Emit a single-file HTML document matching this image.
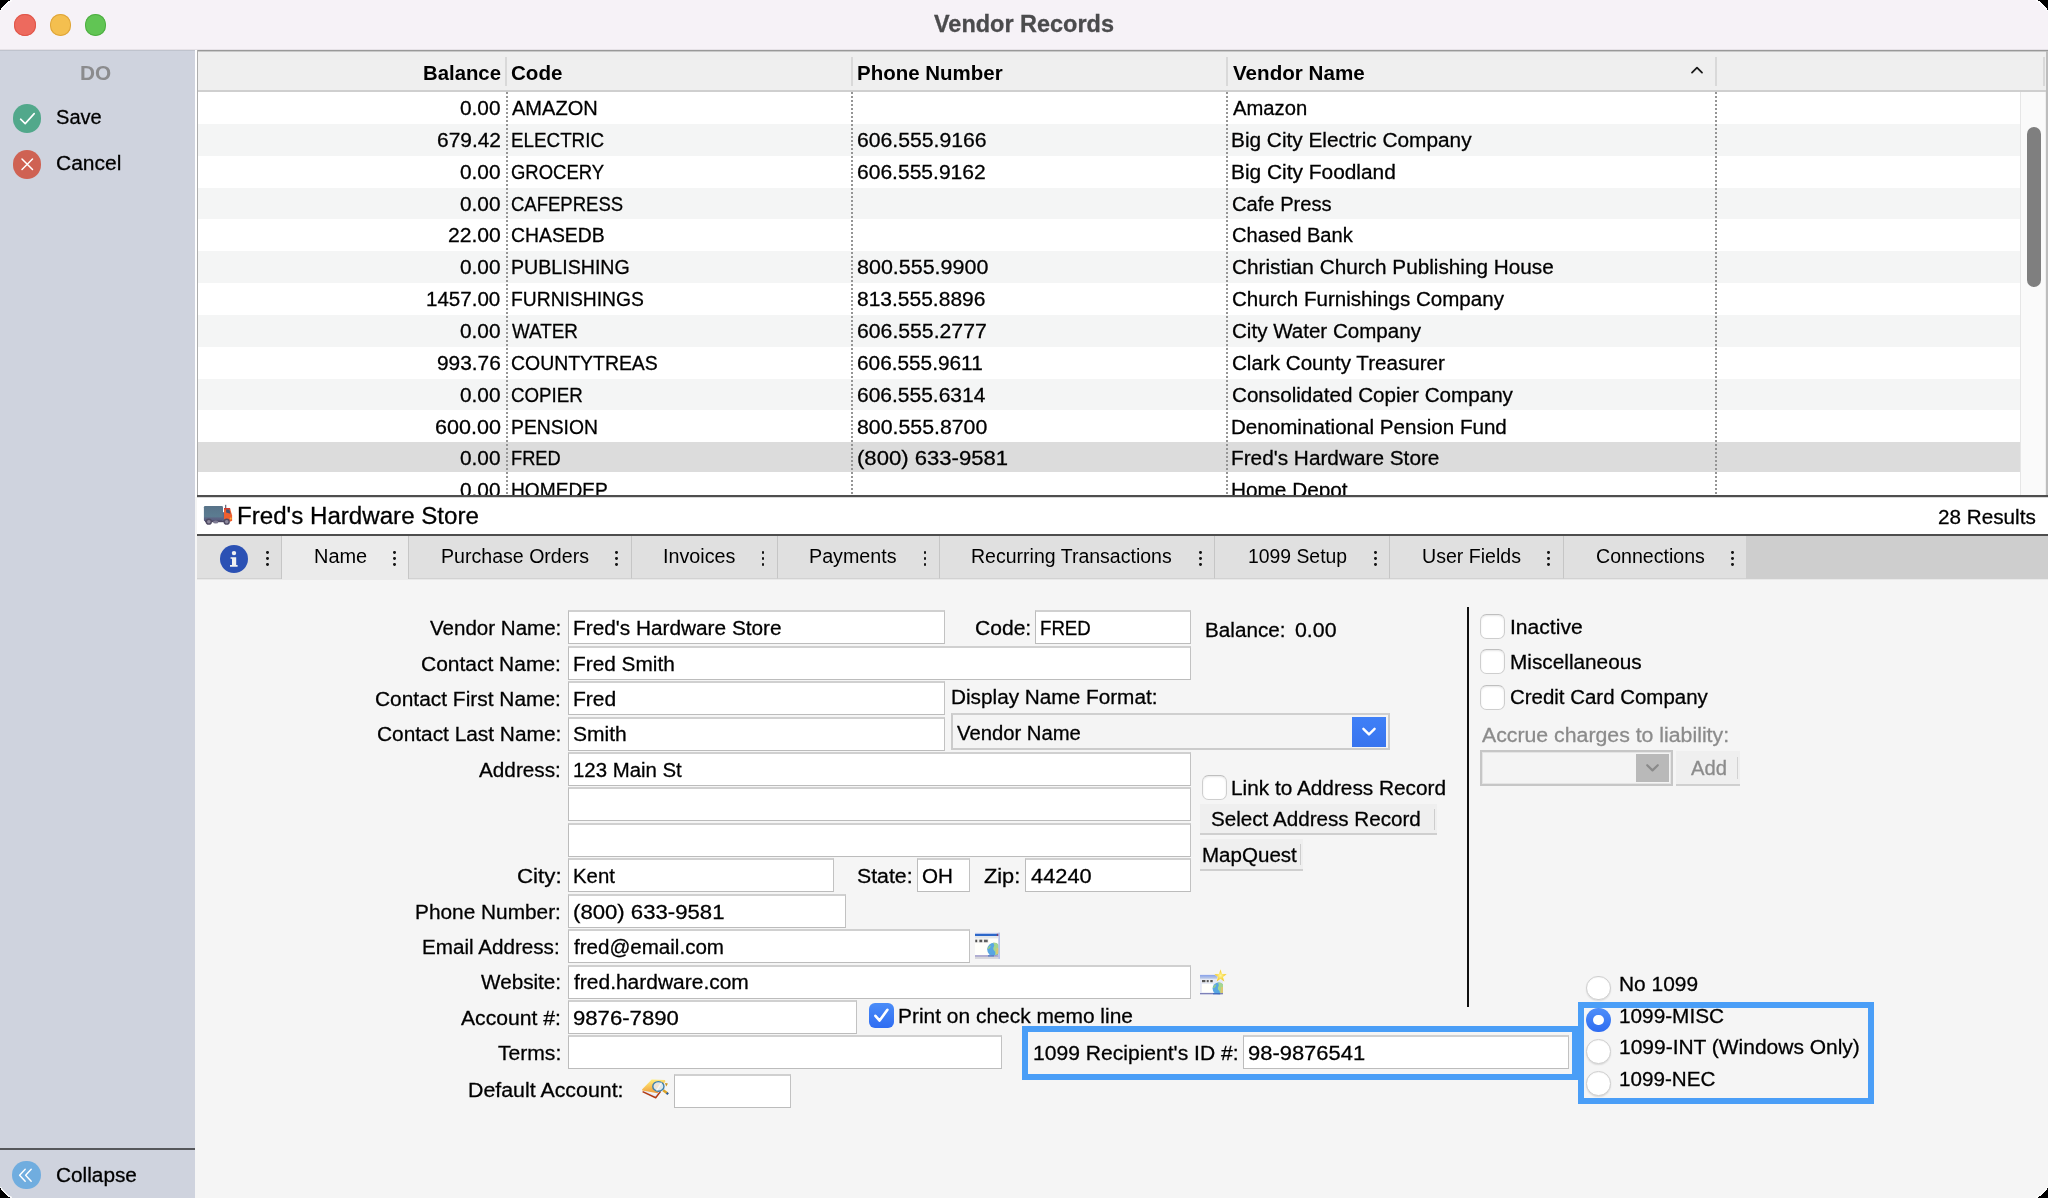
<!DOCTYPE html>
<html><head><meta charset="utf-8"><title>Vendor Records</title>
<style>
html,body{margin:0;padding:0;background:#000;}
body{width:2048px;height:1198px;overflow:hidden;font-family:"Liberation Sans", sans-serif;}
#win{position:absolute;left:0;top:0;width:2048px;height:1198px;overflow:hidden;background:#f5f5f5;will-change:transform;}
#win div,#win span.t,#win svg.a{position:absolute;box-sizing:border-box;}
#win div>svg{display:block;}
span.t{white-space:pre;font-family:"Liberation Sans", sans-serif;transform-origin:0 0;-webkit-text-stroke:.28px currentColor;}
span.b{-webkit-text-stroke:0;}
.f{background:#fff;border:1px solid #bcbcbc;border-top:2px solid #d0d0d0;border-right-color:#c2c2c2;}
</style></head>
<body>
<div id="win">
<div style="left:0px;top:0px;width:2048px;height:50px;background:#f6f2f7;"></div>
<div style="left:0px;top:49px;width:2048px;height:1px;background:#e6e2e7;"></div>
<div style="left:14px;top:14px;width:21.5px;height:21.5px;border-radius:50%;background:#ed6a5e;box-shadow:inset 0 0 0 1px #e0574b;"></div>
<div style="left:49.5px;top:14px;width:21.5px;height:21.5px;border-radius:50%;background:#f4bf4f;box-shadow:inset 0 0 0 1px #dea53a;"></div>
<div style="left:84.5px;top:14px;width:21.5px;height:21.5px;border-radius:50%;background:#61c554;box-shadow:inset 0 0 0 1px #4fae43;"></div>
<span id="t1" class="t b" style="left:933.90px;top:9.23px;font-size:23.3px;line-height:30px;color:#4b4b4d;font-weight:700;transform:scaleX(1.0072);-webkit-text-stroke:.3px #4b4b4d;">Vendor Records</span>
<div style="left:0px;top:50px;width:195px;height:1148px;background:#cfd3de;"></div>
<div style="left:0px;top:50px;width:195px;height:1px;background:#bfc3cd;"></div>
<span id="t2" class="t b" style="left:80.15px;top:60.87px;font-size:20px;line-height:24px;color:#8b8b8d;font-weight:700;transform:scaleX(1.0378);">DO</span>
<div style="left:12.5px;top:104.2px;width:28.5px;height:28.5px;border-radius:50%;background:#52a88b;"><svg width="28.5" height="28.5" viewBox="0 0 28.5 28.5"><path d="M7.6 15.2 L12.2 19.6 L21.2 9.6" fill="none" stroke="#fff" stroke-width="1.6" stroke-linecap="round" stroke-linejoin="round"/></svg></div>
<span id="t3" class="t" style="left:56.10px;top:105.07px;font-size:20px;line-height:24px;color:#000;transform:scaleX(1.0031);">Save</span>
<div style="left:12.5px;top:150.2px;width:28.5px;height:28.5px;border-radius:50%;background:#cf6253;"><svg width="28.5" height="28.5" viewBox="0 0 28.5 28.5"><path d="M9 9 L19.5 19.5 M19.5 9 L9 19.5" fill="none" stroke="#fff" stroke-width="1.5" stroke-linecap="round"/></svg></div>
<span id="t4" class="t" style="left:55.95px;top:151.07px;font-size:20px;line-height:24px;color:#000;transform:scaleX(1.0498);">Cancel</span>
<div style="left:0px;top:1148px;width:195px;height:2px;background:#55565a;"></div>
<div style="left:12.3px;top:1160.6px;width:28.5px;height:28.5px;border-radius:50%;background:#70addf;"><svg width="28.5" height="28.5" viewBox="0 0 28.5 28.5"><path d="M13.2 8.2 L7.6 14.2 L13.2 20.2 M19.2 8.2 L13.6 14.2 L19.2 20.2" fill="none" stroke="#fff" stroke-width="1.4" stroke-linecap="round" stroke-linejoin="round"/></svg></div>
<span id="t5" class="t" style="left:55.96px;top:1162.77px;font-size:20px;line-height:24px;color:#000;transform:scaleX(1.0395);">Collapse</span>
<div style="left:195px;top:50px;width:1853px;height:447px;background:#fff;"></div>
<div style="left:197px;top:50px;width:1851px;height:1px;background:#999;"></div>
<div style="left:197px;top:51px;width:1851px;height:1px;background:#c9c9c9;"></div>
<div style="left:198px;top:52px;width:1848px;height:39px;background:#efefef;"></div>
<div style="left:198px;top:90px;width:1848px;height:2px;background:#cfcfcf;"></div>
<div style="left:198px;top:92px;width:1846px;height:403px;overflow:hidden;">
<div style="left:0px;top:32px;width:1822px;height:32px;background:#f4f5f5;"></div>
<div style="left:0px;top:96px;width:1822px;height:31px;background:#f4f5f5;"></div>
<div style="left:0px;top:159px;width:1822px;height:32px;background:#f4f5f5;"></div>
<div style="left:0px;top:223px;width:1822px;height:32px;background:#f4f5f5;"></div>
<div style="left:0px;top:287px;width:1822px;height:31px;background:#f4f5f5;"></div>
<div style="left:0px;top:350px;width:1822px;height:30px;background:#dcdcdc;"></div>
</div>
<div style="left:2020px;top:92px;width:26px;height:403px;background:#fafafa;border-left:1px solid #e6e6e6;"></div>
<div style="left:2045px;top:92px;width:1px;height:403px;background:#efefef;"></div>
<div style="left:2027px;top:126.5px;width:14px;height:160px;background:#7f7f7f;border-radius:7px;"></div>
<div style="left:506px;top:92px;width:2px;height:403px;background:repeating-linear-gradient(to bottom,#959595 0,#959595 2px,transparent 2px,transparent 4px);"></div>
<div style="left:851px;top:92px;width:2px;height:403px;background:repeating-linear-gradient(to bottom,#959595 0,#959595 2px,transparent 2px,transparent 4px);"></div>
<div style="left:1226px;top:92px;width:2px;height:403px;background:repeating-linear-gradient(to bottom,#959595 0,#959595 2px,transparent 2px,transparent 4px);"></div>
<div style="left:1715px;top:92px;width:2px;height:403px;background:repeating-linear-gradient(to bottom,#959595 0,#959595 2px,transparent 2px,transparent 4px);"></div>
<div style="left:505px;top:57px;width:2px;height:29px;background:#d9d9d9;"></div>
<div style="left:851px;top:57px;width:2px;height:29px;background:#d9d9d9;"></div>
<div style="left:1226px;top:57px;width:2px;height:29px;background:#d9d9d9;"></div>
<div style="left:1715px;top:57px;width:2px;height:29px;background:#d9d9d9;"></div>
<div style="left:2042.5px;top:57px;width:2px;height:29px;background:#d9d9d9;"></div>
<span id="t6" class="t b" style="left:422.68px;top:61.07px;font-size:20px;line-height:24px;color:#000;font-weight:700;transform:scaleX(1.0162);">Balance</span>
<span id="t7" class="t b" style="left:511.18px;top:61.07px;font-size:20px;line-height:24px;color:#000;font-weight:700;transform:scaleX(1.0293);">Code</span>
<span id="t8" class="t b" style="left:856.67px;top:61.07px;font-size:20px;line-height:24px;color:#000;font-weight:700;transform:scaleX(1.0238);">Phone Number</span>
<span id="t9" class="t b" style="left:1232.90px;top:61.07px;font-size:20px;line-height:24px;color:#000;font-weight:700;transform:scaleX(1.0307);">Vendor Name</span>
<div style="left:1690px;top:65px;width:14px;height:10px;"><svg width="14" height="10" viewBox="0 0 14 10"><path d="M2 7.6 L7 2.6 L12 7.6" fill="none" stroke="#1a1a1a" stroke-width="1.8" stroke-linecap="round" stroke-linejoin="round"/></svg></div>
<div style="left:198px;top:92px;width:1846px;height:403px;overflow:hidden;"><div style="left:-198px;top:-92px;width:2048px;height:600px;">
<span id="t10" class="t" style="left:460.27px;top:96.07px;font-size:20px;line-height:24px;color:#000;transform:scaleX(1.0399);">0.00</span>
<span id="t11" class="t" style="left:511.90px;top:96.07px;font-size:20px;line-height:24px;color:#000;transform:scaleX(1.0022);">AMAZON</span>
<span id="t12" class="t" style="left:1233.10px;top:96.07px;font-size:20px;line-height:24px;color:#000;transform:scaleX(1.0105);">Amazon</span>
<span id="t13" class="t" style="left:436.95px;top:128.07px;font-size:20px;line-height:24px;color:#000;transform:scaleX(1.0464);">679.42</span>
<span id="t14" class="t" style="left:511.30px;top:128.07px;font-size:20px;line-height:24px;color:#000;transform:scaleX(0.9403);">ELECTRIC</span>
<span id="t15" class="t" style="left:857.24px;top:128.07px;font-size:20px;line-height:24px;color:#000;transform:scaleX(1.0596);">606.555.9166</span>
<span id="t16" class="t" style="left:1231.44px;top:128.07px;font-size:20px;line-height:24px;color:#000;transform:scaleX(1.0406);">Big City Electric Company</span>
<span id="t17" class="t" style="left:460.27px;top:160.07px;font-size:20px;line-height:24px;color:#000;transform:scaleX(1.0399);">0.00</span>
<span id="t18" class="t" style="left:511.38px;top:160.07px;font-size:20px;line-height:24px;color:#000;transform:scaleX(0.9233);">GROCERY</span>
<span id="t19" class="t" style="left:857.25px;top:160.07px;font-size:20px;line-height:24px;color:#000;transform:scaleX(1.0521);">606.555.9162</span>
<span id="t20" class="t" style="left:1231.43px;top:160.07px;font-size:20px;line-height:24px;color:#000;transform:scaleX(1.0443);">Big City Foodland</span>
<span id="t21" class="t" style="left:460.27px;top:192.07px;font-size:20px;line-height:24px;color:#000;transform:scaleX(1.0399);">0.00</span>
<span id="t22" class="t" style="left:511.37px;top:192.07px;font-size:20px;line-height:24px;color:#000;transform:scaleX(0.9254);">CAFEPRESS</span>
<span id="t23" class="t" style="left:1232.09px;top:192.07px;font-size:20px;line-height:24px;color:#000;transform:scaleX(1.0069);">Cafe Press</span>
<span id="t24" class="t" style="left:447.94px;top:223.07px;font-size:20px;line-height:24px;color:#000;transform:scaleX(1.0553);">22.00</span>
<span id="t25" class="t" style="left:511.33px;top:223.07px;font-size:20px;line-height:24px;color:#000;transform:scaleX(0.9688);">CHASEDB</span>
<span id="t26" class="t" style="left:1232.09px;top:223.07px;font-size:20px;line-height:24px;color:#000;transform:scaleX(1.0061);">Chased Bank</span>
<span id="t27" class="t" style="left:460.27px;top:255.07px;font-size:20px;line-height:24px;color:#000;transform:scaleX(1.0399);">0.00</span>
<span id="t28" class="t" style="left:511.23px;top:255.07px;font-size:20px;line-height:24px;color:#000;transform:scaleX(0.9806);">PUBLISHING</span>
<span id="t29" class="t" style="left:857.44px;top:255.07px;font-size:20px;line-height:24px;color:#000;transform:scaleX(1.0735);">800.555.9900</span>
<span id="t30" class="t" style="left:1232.06px;top:255.07px;font-size:20px;line-height:24px;color:#000;transform:scaleX(1.0375);">Christian Church Publishing House</span>
<span id="t31" class="t" style="left:426.46px;top:287.07px;font-size:20px;line-height:24px;color:#000;transform:scaleX(1.0275);">1457.00</span>
<span id="t32" class="t" style="left:511.26px;top:287.07px;font-size:20px;line-height:24px;color:#000;transform:scaleX(0.9642);">FURNISHINGS</span>
<span id="t33" class="t" style="left:857.46px;top:287.07px;font-size:20px;line-height:24px;color:#000;transform:scaleX(1.0495);">813.555.8896</span>
<span id="t34" class="t" style="left:1232.07px;top:287.07px;font-size:20px;line-height:24px;color:#000;transform:scaleX(1.0278);">Church Furnishings Company</span>
<span id="t35" class="t" style="left:460.27px;top:319.07px;font-size:20px;line-height:24px;color:#000;transform:scaleX(1.0399);">0.00</span>
<span id="t36" class="t" style="left:511.90px;top:319.07px;font-size:20px;line-height:24px;color:#000;transform:scaleX(0.9415);">WATER</span>
<span id="t37" class="t" style="left:857.24px;top:319.07px;font-size:20px;line-height:24px;color:#000;transform:scaleX(1.0604);">606.555.2777</span>
<span id="t38" class="t" style="left:1232.07px;top:319.07px;font-size:20px;line-height:24px;color:#000;transform:scaleX(1.0282);">City Water Company</span>
<span id="t39" class="t" style="left:437.06px;top:351.07px;font-size:20px;line-height:24px;color:#000;transform:scaleX(1.0429);">993.76</span>
<span id="t40" class="t" style="left:511.33px;top:351.07px;font-size:20px;line-height:24px;color:#000;transform:scaleX(0.9713);">COUNTYTREAS</span>
<span id="t41" class="t" style="left:857.26px;top:351.07px;font-size:20px;line-height:24px;color:#000;transform:scaleX(1.0401);">606.555.9611</span>
<span id="t42" class="t" style="left:1232.07px;top:351.07px;font-size:20px;line-height:24px;color:#000;transform:scaleX(1.0294);">Clark County Treasurer</span>
<span id="t43" class="t" style="left:460.27px;top:383.07px;font-size:20px;line-height:24px;color:#000;transform:scaleX(1.0399);">0.00</span>
<span id="t44" class="t" style="left:511.36px;top:383.07px;font-size:20px;line-height:24px;color:#000;transform:scaleX(0.9354);">COPIER</span>
<span id="t45" class="t" style="left:857.25px;top:383.07px;font-size:20px;line-height:24px;color:#000;transform:scaleX(1.0487);">606.555.6314</span>
<span id="t46" class="t" style="left:1232.07px;top:383.07px;font-size:20px;line-height:24px;color:#000;transform:scaleX(1.0314);">Consolidated Copier Company</span>
<span id="t47" class="t" style="left:434.92px;top:415.07px;font-size:20px;line-height:24px;color:#000;transform:scaleX(1.0766);">600.00</span>
<span id="t48" class="t" style="left:511.25px;top:415.07px;font-size:20px;line-height:24px;color:#000;transform:scaleX(0.9657);">PENSION</span>
<span id="t49" class="t" style="left:857.45px;top:415.07px;font-size:20px;line-height:24px;color:#000;transform:scaleX(1.0652);">800.555.8700</span>
<span id="t50" class="t" style="left:1231.45px;top:415.07px;font-size:20px;line-height:24px;color:#000;transform:scaleX(1.0293);">Denominational Pension Fund</span>
<span id="t51" class="t" style="left:460.27px;top:446.07px;font-size:20px;line-height:24px;color:#000;transform:scaleX(1.0399);">0.00</span>
<span id="t52" class="t" style="left:511.34px;top:446.07px;font-size:20px;line-height:24px;color:#000;transform:scaleX(0.9133);">FRED</span>
<span id="t53" class="t" style="left:856.97px;top:446.07px;font-size:20px;line-height:24px;color:#000;transform:scaleX(1.1044);">(800) 633-9581</span>
<span id="t54" class="t" style="left:1231.44px;top:446.07px;font-size:20px;line-height:24px;color:#000;transform:scaleX(1.0392);">Fred&#x27;s Hardware Store</span>
<span id="t55" class="t" style="left:460.27px;top:478.07px;font-size:20px;line-height:24px;color:#000;transform:scaleX(1.0399);">0.00</span>
<span id="t56" class="t" style="left:511.27px;top:478.07px;font-size:20px;line-height:24px;color:#000;transform:scaleX(0.9575);">HOMEDEP</span>
<span id="t57" class="t" style="left:1231.44px;top:478.07px;font-size:20px;line-height:24px;color:#000;transform:scaleX(1.0387);">Home Depot</span>
</div></div>
<div style="left:197px;top:50px;width:1px;height:446px;background:#adadad;"></div>
<div style="left:2046px;top:51px;width:2px;height:445px;background:#bdbdbd;"></div>
<div style="left:197px;top:495px;width:1851px;height:2px;background:#4e4e4e;"></div>
<div style="left:197px;top:497px;width:1851px;height:1px;background:#d8d8d8;"></div>
<div style="left:197px;top:498px;width:1851px;height:36px;background:#fff;"></div>
<span id="t58" class="t" style="left:237.11px;top:501.83px;font-size:23px;line-height:28px;color:#000;transform:scaleX(1.0489);">Fred&#x27;s Hardware Store</span>
<span id="t59" class="t" style="left:1937.97px;top:505.07px;font-size:20px;line-height:24px;color:#000;transform:scaleX(1.0346);">28 Results</span>
<svg class="a" style="left:202px;top:503px" width="32" height="22" viewBox="0 0 32 22"><defs><linearGradient id="tb" x1="0" y1="0" x2="0" y2="1"><stop offset="0" stop-color="#587389"/><stop offset=".68" stop-color="#5b7c91"/><stop offset=".8" stop-color="#5d6585"/><stop offset="1" stop-color="#575a7c"/></linearGradient></defs><rect x="23" y="1.8" width="1.3" height="3.4" fill="#6d6f80"/><rect x="1.9" y="3.1" width="19.1" height="15.2" rx="1.2" fill="url(#tb)"/><rect x="20.8" y="9.2" width="1.6" height="9" fill="#5b6987"/><rect x="3" y="17.6" width="24" height="1.6" fill="#4c4863"/><path d="M22 4.9 H27.9 L30.1 12.6 V17.3 L28.9 18.5 H22 Z" fill="#ef5f2e"/><path d="M22 4.9 H27.9 L28.4 6.6 H22 Z" fill="#d53a2e"/><path d="M24.1 6.6 H27.4 L28.5 10.7 L24.1 9.5 Z" fill="#495170"/><circle cx="28.7" cy="15.4" r="1" fill="#f9b43a"/><ellipse cx="13.7" cy="18.9" rx="2.7" ry="1.5" fill="#7d7a92"/><circle cx="6.8" cy="18.7" r="3.15" fill="#4f4a62"/><circle cx="6.8" cy="18.7" r="1.75" fill="#8d899d"/><circle cx="24.7" cy="18.7" r="3.15" fill="#4f4a62"/><circle cx="24.7" cy="18.7" r="1.75" fill="#8d899d"/></svg>
<div style="left:197px;top:534px;width:1851px;height:2px;background:#4e4e4e;"></div>
<div style="left:197px;top:536px;width:1851px;height:43px;background:#cecece;"></div>
<div style="left:197px;top:579px;width:1851px;height:1px;background:#e9e9e9;"></div>
<div style="left:197px;top:536px;width:85px;height:43px;background:#e0e0e0;border-right:1px solid #c6c6c6;border-bottom:1px solid #d2d2d2;"></div>
<div style="left:265.8px;top:550.8000000000001px;width:2.8px;height:2.8px;background:#141414;border-radius:50%;"></div>
<div style="left:265.8px;top:557.1px;width:2.8px;height:2.8px;background:#141414;border-radius:50%;"></div>
<div style="left:265.8px;top:563.4px;width:2.8px;height:2.8px;background:#141414;border-radius:50%;"></div>
<div style="left:282px;top:536px;width:127px;height:44px;background:#ebebeb;"></div>
<span id="t60" class="t b" style="left:313.50px;top:544.07px;font-size:20px;line-height:24px;color:#000;transform:scaleX(0.9975);">Name</span>
<div style="left:393.20000000000005px;top:550.8000000000001px;width:2.8px;height:2.8px;background:#141414;border-radius:50%;"></div>
<div style="left:393.20000000000005px;top:557.1px;width:2.8px;height:2.8px;background:#141414;border-radius:50%;"></div>
<div style="left:393.20000000000005px;top:563.4px;width:2.8px;height:2.8px;background:#141414;border-radius:50%;"></div>
<div style="left:409px;top:536px;width:223px;height:43px;background:#e0e0e0;border-right:1px solid #c6c6c6;border-bottom:1px solid #d2d2d2;"></div>
<span id="t61" class="t b" style="left:440.83px;top:544.07px;font-size:20px;line-height:24px;color:#000;transform:scaleX(0.9787);">Purchase Orders</span>
<div style="left:615.2px;top:550.8000000000001px;width:2.8px;height:2.8px;background:#141414;border-radius:50%;"></div>
<div style="left:615.2px;top:557.1px;width:2.8px;height:2.8px;background:#141414;border-radius:50%;"></div>
<div style="left:615.2px;top:563.4px;width:2.8px;height:2.8px;background:#141414;border-radius:50%;"></div>
<div style="left:632px;top:536px;width:146px;height:43px;background:#e0e0e0;border-right:1px solid #c6c6c6;border-bottom:1px solid #d2d2d2;"></div>
<span id="t62" class="t b" style="left:662.92px;top:544.07px;font-size:20px;line-height:24px;color:#000;transform:scaleX(0.9877);">Invoices</span>
<div style="left:761.7px;top:550.8000000000001px;width:2.8px;height:2.8px;background:#141414;border-radius:50%;"></div>
<div style="left:761.7px;top:557.1px;width:2.8px;height:2.8px;background:#141414;border-radius:50%;"></div>
<div style="left:761.7px;top:563.4px;width:2.8px;height:2.8px;background:#141414;border-radius:50%;"></div>
<div style="left:778px;top:536px;width:162px;height:43px;background:#e0e0e0;border-right:1px solid #c6c6c6;border-bottom:1px solid #d2d2d2;"></div>
<span id="t63" class="t b" style="left:809.42px;top:544.07px;font-size:20px;line-height:24px;color:#000;transform:scaleX(0.9847);">Payments</span>
<div style="left:923.6px;top:550.8000000000001px;width:2.8px;height:2.8px;background:#141414;border-radius:50%;"></div>
<div style="left:923.6px;top:557.1px;width:2.8px;height:2.8px;background:#141414;border-radius:50%;"></div>
<div style="left:923.6px;top:563.4px;width:2.8px;height:2.8px;background:#141414;border-radius:50%;"></div>
<div style="left:940px;top:536px;width:275px;height:43px;background:#e0e0e0;border-right:1px solid #c6c6c6;border-bottom:1px solid #d2d2d2;"></div>
<span id="t64" class="t b" style="left:971.34px;top:544.07px;font-size:20px;line-height:24px;color:#000;transform:scaleX(0.9759);">Recurring Transactions</span>
<div style="left:1198.8px;top:550.8000000000001px;width:2.8px;height:2.8px;background:#141414;border-radius:50%;"></div>
<div style="left:1198.8px;top:557.1px;width:2.8px;height:2.8px;background:#141414;border-radius:50%;"></div>
<div style="left:1198.8px;top:563.4px;width:2.8px;height:2.8px;background:#141414;border-radius:50%;"></div>
<div style="left:1215px;top:536px;width:175px;height:43px;background:#e0e0e0;border-right:1px solid #c6c6c6;border-bottom:1px solid #d2d2d2;"></div>
<span id="t65" class="t b" style="left:1247.95px;top:544.07px;font-size:20px;line-height:24px;color:#000;transform:scaleX(0.9681);">1099 Setup</span>
<div style="left:1373.8px;top:550.8000000000001px;width:2.8px;height:2.8px;background:#141414;border-radius:50%;"></div>
<div style="left:1373.8px;top:557.1px;width:2.8px;height:2.8px;background:#141414;border-radius:50%;"></div>
<div style="left:1373.8px;top:563.4px;width:2.8px;height:2.8px;background:#141414;border-radius:50%;"></div>
<div style="left:1390px;top:536px;width:174px;height:43px;background:#e0e0e0;border-right:1px solid #c6c6c6;border-bottom:1px solid #d2d2d2;"></div>
<span id="t66" class="t b" style="left:1421.73px;top:544.07px;font-size:20px;line-height:24px;color:#000;transform:scaleX(0.9784);">User Fields</span>
<div style="left:1547.3px;top:550.8000000000001px;width:2.8px;height:2.8px;background:#141414;border-radius:50%;"></div>
<div style="left:1547.3px;top:557.1px;width:2.8px;height:2.8px;background:#141414;border-radius:50%;"></div>
<div style="left:1547.3px;top:563.4px;width:2.8px;height:2.8px;background:#141414;border-radius:50%;"></div>
<div style="left:1564px;top:536px;width:182px;height:43px;background:#e0e0e0;border-bottom:1px solid #d2d2d2;"></div>
<span id="t67" class="t b" style="left:1595.62px;top:544.07px;font-size:20px;line-height:24px;color:#000;transform:scaleX(0.9792);">Connections</span>
<div style="left:1730.8px;top:550.8000000000001px;width:2.8px;height:2.8px;background:#141414;border-radius:50%;"></div>
<div style="left:1730.8px;top:557.1px;width:2.8px;height:2.8px;background:#141414;border-radius:50%;"></div>
<div style="left:1730.8px;top:563.4px;width:2.8px;height:2.8px;background:#141414;border-radius:50%;"></div>
<div style="left:281px;top:536px;width:1px;height:43px;background:#c6c6c6;"></div>
<div style="left:408px;top:536px;width:1px;height:43px;background:#c6c6c6;"></div>
<div style="left:219.6px;top:544.8px;width:28.4px;height:28.4px;border-radius:50%;background:#2b51b4;"><svg width="28.4" height="28.4" viewBox="0 0 28.4 28.4"><circle cx="14" cy="8.1" r="2.2" fill="#f1f1f1"/><path d="M10.6 12.2 H16.2 V20.1 H17.6 V21.8 H10 V20.1 H12 V13.8 H10.6 Z" fill="#f1f1f1"/></svg></div>
<div class="f" style="left:568px;top:610px;width:377px;height:34px;"></div>
<span id="t68" class="t" style="left:429.80px;top:616.07px;font-size:20px;line-height:24px;color:#000;transform:scaleX(1.0270);">Vendor Name:</span>
<span id="t69" class="t" style="left:572.74px;top:616.07px;font-size:20px;line-height:24px;color:#000;transform:scaleX(1.0402);">Fred&#x27;s Hardware Store</span>
<div class="f" style="left:568px;top:646px;width:623px;height:34px;"></div>
<span id="t70" class="t" style="left:421.25px;top:652.07px;font-size:20px;line-height:24px;color:#000;transform:scaleX(1.0487);">Contact Name:</span>
<span id="t71" class="t" style="left:572.74px;top:652.07px;font-size:20px;line-height:24px;color:#000;transform:scaleX(1.0402);">Fred Smith</span>
<div class="f" style="left:568px;top:681px;width:377px;height:34px;"></div>
<span id="t72" class="t" style="left:375.25px;top:687.07px;font-size:20px;line-height:24px;color:#000;transform:scaleX(1.0453);">Contact First Name:</span>
<span id="t73" class="t" style="left:572.72px;top:687.07px;font-size:20px;line-height:24px;color:#000;transform:scaleX(1.0496);">Fred</span>
<div class="f" style="left:568px;top:717px;width:377px;height:34px;"></div>
<span id="t74" class="t" style="left:376.86px;top:722.07px;font-size:20px;line-height:24px;color:#000;transform:scaleX(1.0426);">Contact Last Name:</span>
<span id="t75" class="t" style="left:573.45px;top:722.07px;font-size:20px;line-height:24px;color:#000;transform:scaleX(1.0510);">Smith</span>
<div class="f" style="left:568px;top:752px;width:623px;height:34px;"></div>
<span id="t76" class="t" style="left:479.30px;top:758.07px;font-size:20px;line-height:24px;color:#000;transform:scaleX(1.0367);">Address:</span>
<span id="t77" class="t" style="left:572.87px;top:758.07px;font-size:20px;line-height:24px;color:#000;transform:scaleX(1.0193);">123 Main St</span>
<div class="f" style="left:568px;top:787px;width:623px;height:34px;"></div>
<div class="f" style="left:568px;top:823px;width:623px;height:34px;"></div>
<div class="f" style="left:568px;top:858px;width:266px;height:34px;"></div>
<span id="t78" class="t" style="left:516.69px;top:864.07px;font-size:20px;line-height:24px;color:#000;transform:scaleX(1.1143);">City:</span>
<span id="t79" class="t" style="left:572.77px;top:864.07px;font-size:20px;line-height:24px;color:#000;transform:scaleX(1.0181);">Kent</span>
<div class="f" style="left:568px;top:894px;width:278px;height:34px;"></div>
<span id="t80" class="t" style="left:415.23px;top:900.07px;font-size:20px;line-height:24px;color:#000;transform:scaleX(1.0415);">Phone Number:</span>
<span id="t81" class="t" style="left:573.07px;top:900.07px;font-size:20px;line-height:24px;color:#000;transform:scaleX(1.1074);">(800) 633-9581</span>
<div class="f" style="left:568px;top:929px;width:402px;height:34px;"></div>
<span id="t82" class="t" style="left:422.35px;top:935.07px;font-size:20px;line-height:24px;color:#000;transform:scaleX(1.0318);">Email Address:</span>
<span id="t83" class="t" style="left:574.19px;top:935.07px;font-size:20px;line-height:24px;color:#000;transform:scaleX(1.0281);">fred@email.com</span>
<div class="f" style="left:568px;top:965px;width:623px;height:34px;"></div>
<span id="t84" class="t" style="left:481.00px;top:970.07px;font-size:20px;line-height:24px;color:#000;transform:scaleX(1.0346);">Website:</span>
<span id="t85" class="t" style="left:574.19px;top:970.07px;font-size:20px;line-height:24px;color:#000;transform:scaleX(1.0485);">fred.hardware.com</span>
<div class="f" style="left:568px;top:1000px;width:289px;height:34px;"></div>
<span id="t86" class="t" style="left:461.30px;top:1006.07px;font-size:20px;line-height:24px;color:#000;transform:scaleX(1.0567);">Account #:</span>
<span id="t87" class="t" style="left:573.40px;top:1006.07px;font-size:20px;line-height:24px;color:#000;transform:scaleX(1.1061);">9876-7890</span>
<div class="f" style="left:568px;top:1035px;width:434px;height:34px;"></div>
<span id="t88" class="t" style="left:497.88px;top:1041.07px;font-size:20px;line-height:24px;color:#000;transform:scaleX(1.0546);">Terms:</span>
<span id="t89" class="t" style="left:974.65px;top:616.07px;font-size:20px;line-height:24px;color:#000;transform:scaleX(1.0531);">Code:</span>
<div class="f" style="left:1035px;top:610px;width:156px;height:34px;"></div>
<span id="t90" class="t" style="left:1040.01px;top:616.07px;font-size:20px;line-height:24px;color:#000;transform:scaleX(0.9326);">FRED</span>
<span id="t91" class="t" style="left:1204.55px;top:618.07px;font-size:20px;line-height:24px;color:#000;transform:scaleX(1.0339);">Balance:</span>
<span id="t92" class="t" style="left:1295.35px;top:618.07px;font-size:20px;line-height:24px;color:#000;transform:scaleX(1.0666);">0.00</span>
<span id="t93" class="t" style="left:951.04px;top:684.77px;font-size:20px;line-height:24px;color:#000;transform:scaleX(1.0379);">Display Name Format:</span>
<div style="left:951px;top:713px;width:438.5px;height:37px;background:#f4f4f4;border:2px solid #cbcbcb;border-top-color:#cfcfcf;"></div>
<span id="t94" class="t" style="left:957.10px;top:720.67px;font-size:20px;line-height:24px;color:#000;transform:scaleX(1.0126);">Vendor Name</span>
<div style="left:1352px;top:717px;width:34px;height:30px;background:linear-gradient(#3f80f7,#3874ee);"><svg width="34" height="30" viewBox="0 0 34 30"><path d="M11.4 11.8 L17 17.4 L22.6 11.8" fill="none" stroke="#fff" stroke-width="2.4" stroke-linecap="round" stroke-linejoin="round"/></svg></div>
<span id="t95" class="t" style="left:856.64px;top:864.07px;font-size:20px;line-height:24px;color:#000;transform:scaleX(1.0645);">State:</span>
<div class="f" style="left:917px;top:858px;width:53px;height:34px;"></div>
<span id="t96" class="t" style="left:921.97px;top:864.07px;font-size:20px;line-height:24px;color:#000;transform:scaleX(1.0306);">OH</span>
<span id="t97" class="t" style="left:984.35px;top:864.07px;font-size:20px;line-height:24px;color:#000;transform:scaleX(1.0877);">Zip:</span>
<div class="f" style="left:1025px;top:858px;width:166px;height:34px;"></div>
<span id="t98" class="t" style="left:1030.56px;top:864.07px;font-size:20px;line-height:24px;color:#000;transform:scaleX(1.0901);">44240</span>
<div style="left:1202px;top:775px;width:25px;height:25px;background:#fff;border:1px solid #cecece;border-top-color:#bfbfbf;border-radius:6.5px;box-shadow:inset 0 1px 2px rgba(0,0,0,.10);"></div>
<span id="t99" class="t" style="left:1230.84px;top:775.67px;font-size:20px;line-height:24px;color:#000;transform:scaleX(1.0402);">Link to Address Record</span>
<div style="left:1200px;top:804px;width:237px;height:31px;background:#efefef;border-bottom:2px solid #cfcfcf;"></div>
<div style="left:1434px;top:809px;width:1px;height:21px;background:#cdcdcd;"></div>
<span id="t100" class="t" style="left:1211.37px;top:807.27px;font-size:20px;line-height:24px;color:#000;transform:scaleX(1.0315);">Select Address Record</span>
<div style="left:1200px;top:839px;width:103px;height:31.5px;background:#efefef;border-bottom:2px solid #cfcfcf;"></div>
<div style="left:1300px;top:844px;width:1px;height:21px;background:#cdcdcd;"></div>
<span id="t101" class="t" style="left:1201.56px;top:842.87px;font-size:20px;line-height:24px;color:#000;transform:scaleX(1.0275);">MapQuest</span>
<div style="left:869px;top:1003.3px;width:25px;height:25px;border-radius:6px;background:linear-gradient(#4a8cf8,#2f6df2);"><svg width="25" height="25" viewBox="0 0 25 25"><path d="M6.4 12.8 L10.6 17.6 L18.4 6.8" fill="none" stroke="#fff" stroke-width="2.6" stroke-linecap="round" stroke-linejoin="round"/></svg></div>
<span id="t102" class="t" style="left:898.23px;top:1004.27px;font-size:20px;line-height:24px;color:#000;transform:scaleX(1.0463);">Print on check memo line</span>
<span id="t103" class="t" style="left:468.19px;top:1078.07px;font-size:20px;line-height:24px;color:#000;transform:scaleX(1.0677);">Default Account:</span>
<div class="f" style="left:674px;top:1074px;width:117px;height:34px;"></div>
<svg class="a" style="left:974px;top:931px" width="28" height="30" viewBox="0 0 28 30"><defs><clipPath id="c1"><rect x="1" y="2.8" width="23.2" height="21.6"/></clipPath></defs><rect x="1" y="1.7" width="25" height="26.2" fill="#dadff5"/><rect x="24.2" y="1.7" width="1.8" height="26.2" fill="#b7c1ea"/><rect x="1" y="5" width="23.2" height="19.4" fill="#fffffb"/><rect x="1" y="2.8" width="23.2" height="2.3" fill="#2c67c9"/><rect x="22.8" y="2.8" width="1.4" height="2.3" fill="#7a3f74"/><rect x="1" y="5.1" width="23.2" height="2.3" fill="#e3e6ea"/><rect x="1" y="7.4" width="13.4" height="4.4" fill="#eeeeec"/><rect x="1.3" y="8.7" width="1.9" height="2.5" fill="#4d4d4d"/><rect x="5.4" y="8.7" width="2.8" height="2.5" fill="#555"/><rect x="10" y="8.7" width="3.7" height="2.5" fill="#606060"/><g clip-path="url(#c1)"><circle cx="19.9" cy="18.5" r="6.7" fill="#58a6e2"/><path d="M19.9 18.5 m-1.2 -6.7 q2.4 1.6 1 4.2 q-1.2 2.2 .8 4 q1.4 1.4 .2 4.4 l3 -1.2 q3 -2.6 2.4 -6.4 q-1.2 -4 -4.6 -5 z" fill="#a6d68e"/><path d="M19.9 18.5 m2.6 -1.4 q2.4 -.6 3 1.6 q-.2 3.2 -2.6 5 q-1.6 -1.6 -.6 -3.6 z" fill="#dcc772"/><path d="M19.9 18.5 m-6.7 -.6 q1.6 -2.8 3.2 -3.6 q.8 1.8 -.8 3 q-1 1.2 -2.4 .6 z" fill="#94cf86"/></g><rect x="1" y="24.4" width="23.2" height="1.3" fill="#8c84bb"/><rect x="14" y="24.4" width="6" height="1.3" fill="#3b6fc4"/><rect x="1" y="25.7" width="23.2" height="2.2" fill="#d6d6db"/></svg>
<svg class="a" style="left:1198px;top:966px" width="32" height="32" viewBox="0 0 32 32"><defs><linearGradient id="wt" x1="0" y1="0" x2="0" y2="1"><stop offset="0" stop-color="#86a0ea"/><stop offset="1" stop-color="#c3cfe6"/></linearGradient><radialGradient id="st"><stop offset="0" stop-color="#fff79a"/><stop offset=".7" stop-color="#f6d23c"/><stop offset="1" stop-color="#efc02e"/></radialGradient><clipPath id="c2"><rect x="2" y="12" width="23" height="16.4"/></clipPath></defs><rect x="2" y="8.9" width="23" height="19.4" fill="#e4e8f6"/><rect x="2" y="8.9" width="23" height="3.9" fill="url(#wt)"/><rect x="3.6" y="13.6" width="12" height="3.2" fill="#eceef2"/><rect x="4" y="14" width="3.4" height="2.2" fill="#555"/><rect x="8.7" y="14" width="2" height="2.2" fill="#5a5a5a"/><rect x="12.3" y="14" width="2.4" height="2.2" fill="#4e4e4e"/><rect x="3.8" y="17.8" width="11.2" height="8.6" fill="#fffffb"/><g clip-path="url(#c2)"><circle cx="20.5" cy="22.5" r="5.9" fill="#58a6e2"/><path d="M20.5 22.5 m-1.2 -5.9 q2.4 1.6 1 4.2 q-1.2 2.2 .8 4 q1.4 1.4 .2 4.4 l3 -1.2 q3 -2.6 2.4 -6.4 q-1.2 -4 -4.6 -5 z" fill="#a6d68e"/><path d="M20.5 22.5 m2.6 -1.4 q2.4 -.6 3 1.6 q-.2 3.2 -2.6 5 q-1.6 -1.6 -.6 -3.6 z" fill="#dcc772"/><path d="M20.5 22.5 m-5.9 -.6 q1.6 -2.8 3.2 -3.6 q.8 1.8 -.8 3 q-1 1.2 -2.4 .6 z" fill="#94cf86"/></g><rect x="2" y="27" width="23" height="1.3" fill="#7d80b8"/><rect x="15" y="27" width="7" height="1.3" fill="#3f6dc0"/><path d="M22.5 2.4 L24.4 7.6 L29.6 7.7 L25.5 10.9 L27 16 L22.5 13 L18 16 L19.5 10.9 L15.4 7.7 L20.6 7.6 Z" fill="#fdf7d0" opacity=".75"/><path d="M22.5 3.6 L24 8.1 L28.6 8.2 L24.9 11 L26.2 15.4 L22.5 12.7 L18.8 15.4 L20.1 11 L16.4 8.2 L21 8.1 Z" fill="url(#st)"/></svg>
<svg class="a" style="left:640px;top:1076px" width="32" height="26" viewBox="0 0 32 26"><defs><linearGradient id="bk" x1=".3" y1="0" x2=".6" y2="1"><stop offset="0" stop-color="#fff27c"/><stop offset=".55" stop-color="#f7bd52"/><stop offset="1" stop-color="#ea9a3e"/></linearGradient><radialGradient id="ln" cx=".4" cy=".45" r=".7"><stop offset="0" stop-color="#f6e0c9"/><stop offset=".6" stop-color="#dce9ee"/><stop offset="1" stop-color="#b5dcf2"/></radialGradient></defs><path d="M3 15.2 L15.6 21.2 L20.6 15 L18.6 14.6 L15.2 19 L3.6 14 Z" fill="#e6e8f6"/><path d="M2.6 15.6 L15.7 21.8 L20.6 15.4" fill="none" stroke="#b13a12" stroke-width="1.5" stroke-linejoin="round"/><path d="M11.7 3.6 L24.9 4 L25.4 5.2 L17.6 17.2 L2.2 14.6 L2 13.6 Z" fill="url(#bk)"/><path d="M25 7 L27.9 7.5 L26.2 10.6 Z" fill="#c8921c"/><path d="M23.2 14.3 L27.2 17.3" stroke="#dba427" stroke-width="2.5" stroke-linecap="butt"/><path d="M26.6 16.9 L28.2 18.1" stroke="#2c5c9c" stroke-width="2.4" stroke-linecap="butt"/><ellipse cx="18.4" cy="10.4" rx="5.6" ry="4.8" fill="url(#ln)" stroke="#3f7eab" stroke-width="1.4"/><path d="M21.6 6.6 L16.6 14.6" stroke="#fff" stroke-width="1.2" opacity=".7"/></svg>
<span id="t104" class="t" style="left:1032.72px;top:1041.37px;font-size:20px;line-height:24px;color:#000;transform:scaleX(1.0538);">1099 Recipient&#x27;s ID #:</span>
<div class="f" style="left:1243px;top:1035px;width:326px;height:34px;"></div>
<span id="t105" class="t" style="left:1247.61px;top:1041.37px;font-size:20px;line-height:24px;color:#000;transform:scaleX(1.0968);">98-9876541</span>
<div style="left:1467px;top:607px;width:2px;height:400px;background:#111;"></div>
<div style="left:1480px;top:614px;width:25px;height:25px;background:#fff;border:1px solid #cecece;border-top-color:#bfbfbf;border-radius:6.5px;box-shadow:inset 0 1px 2px rgba(0,0,0,.10);"></div>
<span id="t106" class="t" style="left:1509.50px;top:615.07px;font-size:20px;line-height:24px;color:#000;transform:scaleX(1.0543);">Inactive</span>
<div style="left:1480px;top:649px;width:25px;height:25px;background:#fff;border:1px solid #cecece;border-top-color:#bfbfbf;border-radius:6.5px;box-shadow:inset 0 1px 2px rgba(0,0,0,.10);"></div>
<span id="t107" class="t" style="left:1509.74px;top:650.27px;font-size:20px;line-height:24px;color:#000;transform:scaleX(1.0391);">Miscellaneous</span>
<div style="left:1480px;top:685px;width:25px;height:25px;background:#fff;border:1px solid #cecece;border-top-color:#bfbfbf;border-radius:6.5px;box-shadow:inset 0 1px 2px rgba(0,0,0,.10);"></div>
<span id="t108" class="t" style="left:1510.38px;top:685.37px;font-size:20px;line-height:24px;color:#000;transform:scaleX(1.0223);">Credit Card Company</span>
<span id="t109" class="t" style="left:1481.60px;top:722.57px;font-size:20px;line-height:24px;color:#8b8b8b;transform:scaleX(1.0635);">Accrue charges to liability:</span>
<div style="left:1480px;top:750px;width:193px;height:35.5px;background:#f4f4f4;border:2px solid #c6c6c6;box-shadow:inset 0 0 0 1px #e4e4e4;"></div>
<div style="left:1636px;top:753.5px;width:33px;height:28.5px;background:#b9b9b9;"><svg width="33" height="28" viewBox="0 0 33 28"><path d="M11.2 11.2 L16.5 16.4 L21.8 11.2" fill="none" stroke="#8a8a8a" stroke-width="2.2" stroke-linecap="round" stroke-linejoin="round"/></svg></div>
<div style="left:1676px;top:750.5px;width:64px;height:35px;background:#efefef;border-bottom:2px solid #cfcfcf;"></div>
<div style="left:1737px;top:757px;width:1px;height:22px;background:#d2d2d2;"></div>
<span id="t110" class="t" style="left:1691.20px;top:755.87px;font-size:20px;line-height:24px;color:#8b8b8b;transform:scaleX(1.0098);">Add</span>
<div style="left:1586px;top:975.7px;width:24.6px;height:24.6px;border-radius:50%;background:#fff;border:1px solid #cfcfcf;box-shadow:0 1px 1.5px rgba(0,0,0,.10), inset 0 1px 1px rgba(0,0,0,.04);"></div>
<span id="t111" class="t" style="left:1618.93px;top:972.27px;font-size:20px;line-height:24px;color:#000;transform:scaleX(1.0453);">No 1099</span>
<div style="left:1586px;top:1007.9000000000001px;width:24.6px;height:24.6px;border-radius:50%;background:linear-gradient(#4f8ff9,#2f6cf1);"></div>
<div style="left:1593.0px;top:1014.9000000000001px;width:10.6px;height:10.6px;border-radius:50%;background:#fff;"></div>
<span id="t112" class="t" style="left:1619.04px;top:1003.67px;font-size:20px;line-height:24px;color:#000;transform:scaleX(1.0383);">1099-MISC</span>
<div style="left:1586px;top:1039.4px;width:24.6px;height:24.6px;border-radius:50%;background:#fff;border:1px solid #cfcfcf;box-shadow:0 1px 1.5px rgba(0,0,0,.10), inset 0 1px 1px rgba(0,0,0,.04);"></div>
<span id="t113" class="t" style="left:1619.03px;top:1035.47px;font-size:20px;line-height:24px;color:#000;transform:scaleX(1.0484);">1099-INT (Windows Only)</span>
<div style="left:1586px;top:1071.1000000000001px;width:24.6px;height:24.6px;border-radius:50%;background:#fff;border:1px solid #cfcfcf;box-shadow:0 1px 1.5px rgba(0,0,0,.10), inset 0 1px 1px rgba(0,0,0,.04);"></div>
<span id="t114" class="t" style="left:1619.05px;top:1067.27px;font-size:20px;line-height:24px;color:#000;transform:scaleX(1.0314);">1099-NEC</span>
<div style="left:1022px;top:1026px;width:556px;height:54px;border:6px solid #4a9ef7;"></div>
<div style="left:1578px;top:1002px;width:296px;height:102px;border:6px solid #4a9ef7;"></div>
<svg class="a" style="left:0px;top:0px" width="14" height="14" viewBox="0 0 14 14"><g transform=""><path d="M11.8 0.3 L9.4 1.6 L7.6 2.7 L5.6 4.6 L3.6 6.6 L1.7 8.7 L0.4 10.9" fill="none" stroke="#fff" stroke-width="1.6" opacity=".9"/><path d="M0 0 H11.3 L9.2 1.1 L7.4 2.1 L6.3 3.1 L5.3 4.1 L4.3 5.1 L3.3 6.1 L2.3 7.1 L1.3 8.2 L0.9 9.3 L0 10.4 Z" fill="#000" shape-rendering="crispEdges"/></g></svg>
<svg class="a" style="left:2034px;top:0px" width="14" height="14" viewBox="0 0 14 14"><g transform="translate(14 0) scale(-1 1)"><path d="M11.8 0.3 L9.4 1.6 L7.6 2.7 L5.6 4.6 L3.6 6.6 L1.7 8.7 L0.4 10.9" fill="none" stroke="#fff" stroke-width="1.6" opacity=".9"/><path d="M0 0 H11.3 L9.2 1.1 L7.4 2.1 L6.3 3.1 L5.3 4.1 L4.3 5.1 L3.3 6.1 L2.3 7.1 L1.3 8.2 L0.9 9.3 L0 10.4 Z" fill="#000" shape-rendering="crispEdges"/></g></svg>
<svg class="a" style="left:0px;top:1184px" width="14" height="14" viewBox="0 0 14 14"><g transform="translate(0 14) scale(1 -1)"><path d="M11.8 0.3 L9.4 1.6 L7.6 2.7 L5.6 4.6 L3.6 6.6 L1.7 8.7 L0.4 10.9" fill="none" stroke="#fff" stroke-width="1.6" opacity=".9"/><path d="M0 0 H11.3 L9.2 1.1 L7.4 2.1 L6.3 3.1 L5.3 4.1 L4.3 5.1 L3.3 6.1 L2.3 7.1 L1.3 8.2 L0.9 9.3 L0 10.4 Z" fill="#000" shape-rendering="crispEdges"/></g></svg>
<svg class="a" style="left:2034px;top:1184px" width="14" height="14" viewBox="0 0 14 14"><g transform="translate(14 14) scale(-1 -1)"><path d="M11.8 0.3 L9.4 1.6 L7.6 2.7 L5.6 4.6 L3.6 6.6 L1.7 8.7 L0.4 10.9" fill="none" stroke="#fff" stroke-width="1.6" opacity=".9"/><path d="M0 0 H11.3 L9.2 1.1 L7.4 2.1 L6.3 3.1 L5.3 4.1 L4.3 5.1 L3.3 6.1 L2.3 7.1 L1.3 8.2 L0.9 9.3 L0 10.4 Z" fill="#000" shape-rendering="crispEdges"/></g></svg>
</div>
</body></html>
